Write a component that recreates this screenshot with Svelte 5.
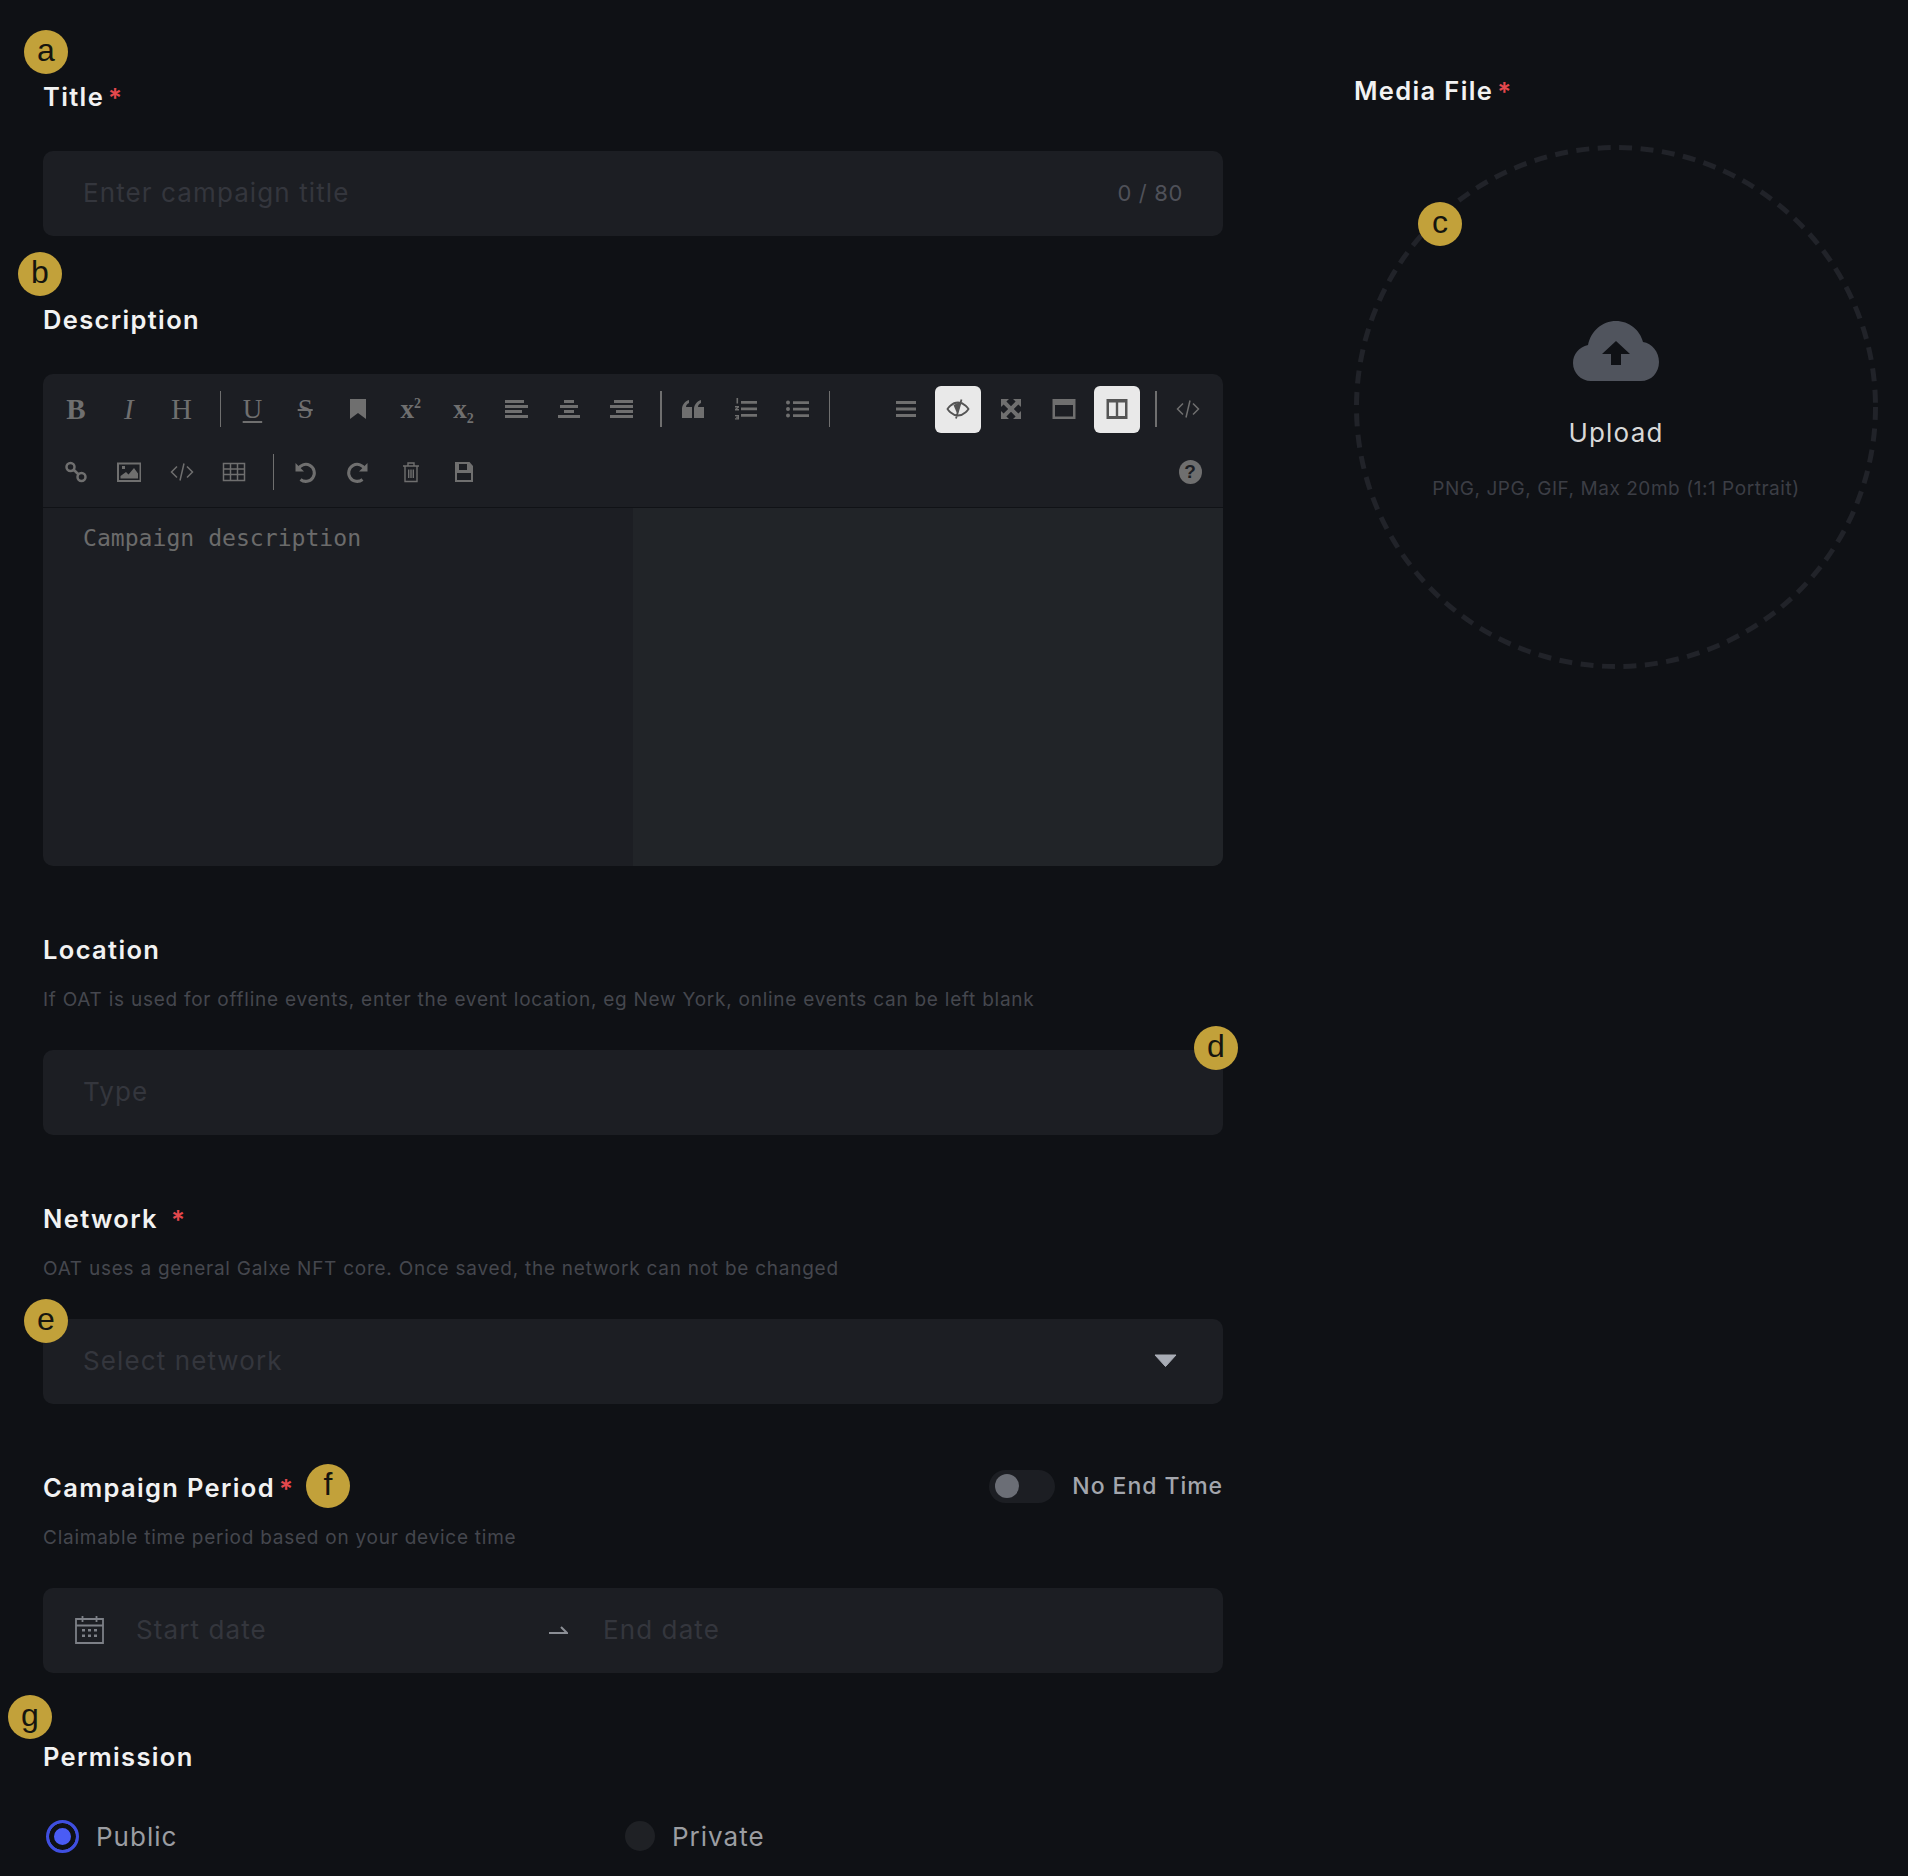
<script>
	const icons = {
		bookmark: { d: 'M4 2h16v20l-8-6-8 6z' },
		alignLeft: { d: 'M1 3h19v3H1zM1 8h23v3H1zM1 13h17v3H1zM1 18h23v3H1z' },
		alignCenter: { d: 'M7 3h10v3H7zM3 8h18v3H3zM7 13h10v3H7zM1 18h22v3H1z' },
		alignRight: { d: 'M4 3h19v3H4zM0 8h23v3H0zM6 13h17v3H6zM0 18h23v3H0z' },
		quote: { d: 'M1 21v-9c0-4 3-8 7-9v3c-2 .8-3 2.500-3 4h6v11zM13 21v-9c0-4 3-8 7-9v3c-2 .8-3 2.500-3 4h6v11z' },
		ol: { d: 'M7 4h16v2.800H7zM7 10.500h16v2.800H7zM7 17h16v2.800H7zM2.500 1h1.600v5.500H2.500zM1 9h4v1.400L3 12h2v1.400H1V12l2.200-1.600H1zM1 18h4v4.500H1v-1.200h2.600v-.5H2v-1h1.600v-.6H1z' },
		ul: { d: 'M0 5.500a2 2 0 1 0 4 0a2 2 0 1 0-4 0zM0 12a2 2 0 1 0 4 0a2 2 0 1 0-4 0zM0 18.500a2 2 0 1 0 4 0a2 2 0 1 0-4 0zM7 4.200h16v2.800H7zM7 10.700h16v2.800H7zM7 17.200h16v2.800H7z' },
		menu: { d: 'M2 4h20v3H2zM2 10.500h20v3H2zM2 17h20v3H2z' },
		eye: { d: 'M7.500 8l4 9.500 3.500-13z', s: 'M1.500 12s4-6.500 10.500-6.500S22.500 12 22.500 12s-4 6.500-10.500 6.500S1.500 12 1.500 12zM15.500 2.500L10 21.500', w: 1.800 },
		fullscreen: { d: 'M2 2h8l-2.600 2.600 4.600 4.600 4.600-4.600L14 2h8v8l-2.600-2.600-4.600 4.600 4.600 4.600L22 14v8h-8l2.600-2.600-4.600-4.600-4.600 4.600L10 22H2v-8l2.600 2.600 4.600-4.600-4.600-4.600L2 10z' },
		windowMax: { d: 'M0.500 2h23v20h-23zM3 8v11.500h18V8z' },
		columns: { d: 'M1.500 2h21v20h-21zM4 5.500v13.500h6.800V5.500zM13.200 5.500v13.500H20V5.500z' },
		code: { s: 'M7 6.500L1.500 12 7 17.500M17 6.500l5.500 5.500-5.500 5.500M14 3.500l-4 17', w: 1.500 },
		link: { s: 'M2.500 7a4 4 0 1 0 8 0a4 4 0 1 0-8 0zM13.500 17a4 4 0 1 0 8 0a4 4 0 1 0-8 0zM10 10l4 4', w: 2.500 },
		image: { d: 'M0 2.500h24.500v19.500H0zM2 4.500v15.500h20.500V4.500zM3.500 18.500h17.500v-5l-4-5.500-5.500 6.500-2.500-2.500-5.500 4zM5 6h3v3H5z' },
		table: { s: 'M1.500 3.500h21v17h-21zM1.500 9h21M1.500 14.500h21M8.500 3.500v17M15.500 3.500v17', w: 1.500 },
		undo: { d: 'M2.500 3v8.500H11z', s: 'M5 9.500A8.500 8.500 0 1 1 7.500 19.500', w: 3 },
		redo: { d: 'M21.500 3v8.500H13z', s: 'M19 9.500A8.500 8.500 0 1 0 16.500 19.500', w: 3 },
		trash: { s: 'M4 6h16M9 6V3h6v3M6 6v15.500h12V6M9.700 9.500v8.500M12 9.500v8.500M14.300 9.500v8.500', w: 1.400 },
		save: { d: 'M3 2h14.500l3.500 4v16H3zM7 4v6h8V4zM5 13v7h14v-7z' }
	};

	const rowOne = [
		{ text: 'B', cls: 'b' },
		{ text: 'I', cls: 'i' },
		{ text: 'H', cls: 'h' },
		{ sep: true },
		{ text: 'U', cls: 'under' },
		{ text: 'S', cls: 'strike' },
		{ icon: 'bookmark' },
		{ text: 'x', sup: '2', cls: 'script' },
		{ text: 'x', sub: '2', cls: 'script' },
		{ icon: 'alignLeft' },
		{ icon: 'alignCenter' },
		{ icon: 'alignRight' },
		{ sep: true },
		{ icon: 'quote' },
		{ icon: 'ol' },
		{ icon: 'ul' },
		{ sep: true, tight: true },
		{ spacer: true },
		{ icon: 'menu' },
		{ icon: 'eye', active: true },
		{ icon: 'fullscreen' },
		{ icon: 'windowMax' },
		{ icon: 'columns', active: true },
		{ sep: true },
		{ icon: 'code' }
	];

	const rowTwo = [
		{ icon: 'link' },
		{ icon: 'image' },
		{ icon: 'code' },
		{ icon: 'table' },
		{ sep: true },
		{ icon: 'undo' },
		{ icon: 'redo' },
		{ icon: 'trash' },
		{ icon: 'save' },
		{ help: true }
	];

	const badges = [
		{ label: 'a', x: 46, y: 52 },
		{ label: 'b', x: 40, y: 274 },
		{ label: 'c', x: 1440, y: 224 },
		{ label: 'd', x: 1216, y: 1048 },
		{ label: 'e', x: 46, y: 1321 },
		{ label: 'f', x: 328, y: 1486 },
		{ label: 'g', x: 30, y: 1717 }
	];
</script>

{#snippet toolbarRow(items)}
	<div class="tool-row">
		{#each items as item}
			{#if item.sep}
				<i class="sep" class:tight={item.tight}></i>
			{:else if item.spacer}
				<i class="spacer"></i>
			{:else if item.help}
				<button type="button" class="tool help-btn"><span class="help">?</span></button>
			{:else if item.icon}
				<button type="button" class="tool" class:active={item.active} aria-label={item.icon}>
					<svg viewBox="0 0 24 24" aria-hidden="true">
						{#if icons[item.icon].d}
							<path d={icons[item.icon].d} fill="currentColor" fill-rule="evenodd" />
						{/if}
						{#if icons[item.icon].s}
							<path d={icons[item.icon].s} fill="none" stroke="currentColor" stroke-width={icons[item.icon].w} />
						{/if}
					</svg>
				</button>
			{:else}
				<button type="button" class="tool glyph {item.cls}">
					<span>{item.text}{#if item.sup}<sup>{item.sup}</sup>{/if}{#if item.sub}<sub>{item.sub}</sub>{/if}</span>
				</button>
			{/if}
		{/each}
	</div>
{/snippet}

<div class="page">
	<main class="form">
		<section class="field first">
			<h3 class="label big-gap">Title<span class="star">*</span></h3>
			<div class="input">
				<span class="placeholder">Enter campaign title</span>
				<span class="count">0 / 80</span>
			</div>
		</section>

		<section class="field">
			<h3 class="label big-gap">Description</h3>
			<div class="editor">
				<div class="toolbar">
					{@render toolbarRow(rowOne)}
					{@render toolbarRow(rowTwo)}
				</div>
				<div class="panes">
					<div class="pane-write">Campaign description</div>
					<div class="pane-preview"></div>
				</div>
			</div>
		</section>

		<section class="field">
			<h3 class="label">Location</h3>
			<p class="hint">If OAT is used for offline events, enter the event location, eg New York, online events can be left blank</p>
			<div class="input"><span class="placeholder">Type</span></div>
		</section>

		<section class="field">
			<h3 class="label">Network<span class="star wide">*</span></h3>
			<p class="hint">OAT uses a general Galxe NFT core. Once saved, the network can not be changed</p>
			<div class="input">
				<span class="placeholder">Select network</span>
				<svg class="caret" viewBox="0 0 23 13" aria-hidden="true"><path d="M1 1h21L11.500 12.500z" stroke="currentColor" stroke-linejoin="round" /></svg>
			</div>
		</section>

		<section class="field">
			<div class="label-row">
				<h3 class="label">Campaign Period<span class="star">*</span></h3>
				<div class="end-toggle">
					<span class="switch"><span class="knob"></span></span>
					<span>No End Time</span>
				</div>
			</div>
			<p class="hint">Claimable time period based on your device time</p>
			<div class="input date">
				<svg class="calendar" viewBox="0 0 29 29" aria-hidden="true">
					<path d="M1 4h27v24H1zM1 10.500h27M7.500 1v6M21.500 1v6" fill="none" stroke="currentColor" stroke-width="1.800" />
					<path d="M7 14h3v2.500H7zM13 14h3v2.500h-3zM19 14h3v2.500h-3zM7 19.500h3V22H7zM13 19.500h3V22h-3zM19 19.500h3V22h-3z" fill="currentColor" />
				</svg>
				<span class="placeholder start">Start date</span>
				<svg class="arrow" viewBox="0 0 19 10" aria-hidden="true"><path d="M0 8h18L12 2" fill="none" stroke="currentColor" stroke-width="2" /></svg>
				<span class="placeholder">End date</span>
			</div>
		</section>

		<section class="field">
			<h3 class="label big-gap">Permission</h3>
			<div class="radios">
				<label class="radio"><span class="dot on"></span>Public</label>
				<label class="radio"><span class="dot"></span>Private</label>
			</div>
		</section>
	</main>

	<aside class="media">
		<h3 class="label">Media File<span class="star">*</span></h3>
		<div class="drop">
			<svg class="ring" viewBox="0 0 524 524" aria-hidden="true">
				<circle cx="262" cy="262" r="259.500" fill="none" stroke="#212329" stroke-width="5" stroke-dasharray="13 8.500" />
			</svg>
			<svg class="cloud" viewBox="0 0 86 60" aria-hidden="true">
				<path d="M18 60C8 60 0 52 0 42c0-9 6-16 15-18C18 10 29 0 43 0c13 0 24 9 27 21 9 1 16 10 16 20 0 11-8 19-18 19z" fill="#50545d" />
				<path d="M43 20L57 33H48V44H38V33H29z" fill="#0f1115" />
			</svg>
			<div class="upload">Upload</div>
			<div class="upload-hint">PNG, JPG, GIF, Max 20mb (1:1 Portrait)</div>
		</div>
	</aside>

	{#each badges as badge}
		<span class="badge" style="left: {badge.x}px; top: {badge.y}px">{badge.label}</span>
	{/each}
</div>

<style>
	:global(body) { margin: 0; background: #0f1115; }
	.page { position: relative; display: flex; gap: 131px; min-height: 1876px; padding-left: 43px; box-sizing: border-box; background: #0f1115; color: #f2f2f2; font-family: Inter, "Noto Sans", sans-serif; overflow: hidden; }
	.form { width: 1180px; flex: none; }
	.media { width: 524px; flex: none; padding-top: 76px; }
	.field { margin-top: 69px; }
	.field.first { margin-top: 82px; }
	.label { margin: 0; font-size: 25.500px; line-height: 30px; font-weight: 600; letter-spacing: 1.350px; color: #f2f2f2; }
	.label.big-gap { margin-bottom: 39px; }
	.label-row { display: flex; justify-content: space-between; align-items: center; height: 30px; }
	.star { margin-left: 4px; font-size: 26px; line-height: 0; color: #e5484d; vertical-align: -1px; letter-spacing: 0; }
	.star.wide { margin-left: 13px; }
	.hint { margin: 21px 0 36px; font-size: 19px; line-height: 28px; color: #45474e; letter-spacing: 0.750px; }
	.input { display: flex; align-items: center; justify-content: space-between; height: 85px; padding: 0 40px 2px; box-sizing: border-box; border-radius: 10px; background: #1c1e23; }
	.placeholder { font-size: 26px; color: #34363d; letter-spacing: 1.100px; }
	.count { font-size: 22px; color: #4f5159; letter-spacing: 0.650px; }
	.caret { width: 23px; height: 13px; margin-right: 6px; color: #a8acb5; fill: currentColor; }
	.date { justify-content: flex-start; padding-left: 32px; }
	.calendar { width: 29px; height: 29px; margin-right: 32px; color: #7d8087; }
	.start { width: 412px; }
	.arrow { width: 19px; height: 10px; margin: 0 35px 0 1px; color: #8b8e95; }
	.end-toggle { display: flex; align-items: center; gap: 17px; margin-top: -4px; font-size: 23px; font-weight: 500; color: #a3a6ad; letter-spacing: 0.950px; }
	.switch { display: flex; align-items: center; width: 66px; height: 33px; padding-left: 6px; box-sizing: border-box; border-radius: 17px; background: #1c1e23; }
	.knob { width: 24px; height: 24px; border-radius: 50%; background: #6b6e76; }
	.radios { display: grid; grid-template-columns: 582px 1fr; height: 50px; }
	.radio { display: flex; align-items: center; gap: 17px; font-size: 26px; color: #9b9da2; letter-spacing: 1px; }
	.dot { width: 30px; height: 30px; border-radius: 50%; background: #1f2125; flex: none; }
	.dot.on { box-sizing: border-box; width: 33px; height: 33px; margin-left: 3px; background: #4a5cf5; border: 3px solid #3f4fe0; box-shadow: inset 0 0 0 5px #0f1115; }

	.editor { height: 492px; display: flex; flex-direction: column; border-radius: 10px; overflow: hidden; background: #1c1e23; }
	.toolbar { height: 134px; padding: 3.500px 6.600px 0; box-sizing: border-box; border-bottom: 1px solid #101216; }
	.tool-row { display: flex; align-items: center; height: 63px; }
	.tool { width: 46px; height: 47px; margin: 0 3.400px; padding: 0; flex: none; display: flex; align-items: center; justify-content: center; border: 0; border-radius: 6px; background: transparent; color: #6f6f6f; }
	.tool svg { width: 24px; height: 24px; }
	.tool.active { background: #e9e9e9; color: #555; }
	.glyph { font-family: "Liberation Serif", serif; font-size: 29px; line-height: 1; }
	.glyph.b { font-weight: 700; }
	.glyph.i { font-style: italic; }
	.glyph.under span { text-decoration: underline; text-underline-offset: 3px; font-size: 27px; }
	.glyph.strike span { text-decoration: line-through; font-size: 27px; }
	.glyph.script { font-size: 27px; font-weight: 700; }
	.glyph sup, .glyph sub { font-size: 14px; line-height: 0; }
	.glyph sup { vertical-align: 10px; }
	.glyph sub { vertical-align: -5px; }
	.sep { flex: none; width: 1.500px; height: 36px; margin: 0 4.600px 0 12px; background: #6f6f6f; }
	.sep.tight { margin-left: 4px; }
	.spacer { flex: none; width: 44.400px; }
	.help-btn { margin-left: auto; }
	.help { width: 23px; height: 24px; display: flex; align-items: center; justify-content: center; border-radius: 50%; background: #6f6f6f; color: #1c1e23; font: 700 19px "Liberation Sans", sans-serif; }
	.panes { flex: 1; display: flex; }
	.pane-write { width: 590px; padding: 15px 40px; box-sizing: border-box; font: 23.100px/30px "DejaVu Sans Mono", monospace; color: #6b6b6b; }
	.pane-preview { flex: 1; background: #212428; }

	.drop { position: relative; width: 524px; height: 524px; margin-top: 39px; display: flex; flex-direction: column; align-items: center; }
	.ring { position: absolute; inset: 0; }
	.cloud { width: 86px; height: 60px; margin-top: 176px; }
	.upload { margin-top: 36px; font-size: 26px; line-height: 32px; color: #d8d8d8; letter-spacing: 1.200px; }
	.upload-hint { margin-top: 26px; font-size: 19px; line-height: 28px; color: #3c3e45; letter-spacing: 0.550px; }

	.badge { position: absolute; width: 44px; height: 44px; margin: -22px 0 0 -22px; display: flex; align-items: center; justify-content: center; border-radius: 50%; background: #c2a13a; color: #15150f; font: 32px/1 "Liberation Sans", sans-serif; padding-bottom: 5px; box-sizing: border-box; }
</style>
